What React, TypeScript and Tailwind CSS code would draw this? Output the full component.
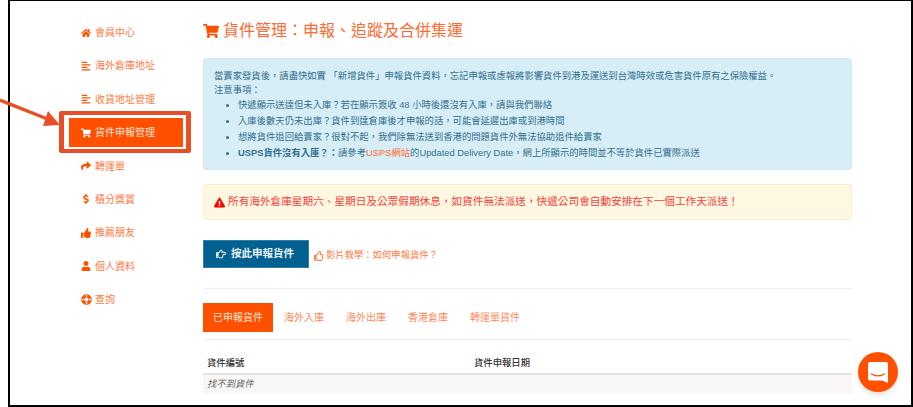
import React from 'react';
import {
  FaHome,
  FaAlignLeft,
  FaShoppingCart,
  FaShare,
  FaDollarSign,
  FaThumbsUp,
  FaUser,
  FaLifeRing,
  FaExclamationTriangle,
  FaRegHandPointRight,
  FaRegThumbsUp,
} from 'react-icons/fa';

const navItems = [
  { label: '會員中心', icon: FaHome },
  { label: '海外倉庫地址', icon: FaAlignLeft },
  { label: '收貨地址管理', icon: FaAlignLeft },
  { label: '貨件申報管理', icon: FaShoppingCart, active: true },
  { label: '轉運單', icon: FaShare },
  { label: '積分獎賞', icon: FaDollarSign },
  { label: '推薦朋友', icon: FaThumbsUp },
  { label: '個人資料', icon: FaUser },
  { label: '查詢', icon: FaLifeRing, rotated: true },
];

const tabs = ['海外入庫', '海外出庫', '香港倉庫', '轉運單貨件'];

export default function App() {
  return (
    <div
      lang="zh-Hant"
      className="relative w-[913px] h-[407px] overflow-hidden bg-white font-['Liberation_Sans','Noto_Sans_CJK_TC',sans-serif]"
    >
      {/* Screenshot frame */}
      <div className="flex ml-2 w-[905px] h-[407px] border-t border-r-2 border-b-2 border-l-2 border-black">
        {/* Sidebar */}
        <aside className="w-[193px] shrink-0 pl-[59px] pt-[17px]">
          <nav className="flex flex-col gap-[4.4px] w-[114px]">
            {navItems.map((item) => (
              <a
                key={item.label}
                className={`flex items-center h-[29px] pl-3 gap-1 text-[10px] ${
                  item.active ? 'bg-[#ff5000] text-[#ffe4d6]' : 'text-[#ff7a45]'
                }`}
              >
                <span className={`flex justify-center w-[10px] ${item.active ? 'text-white' : 'text-[#ff5000]'}`}>
                  <item.icon className={item.rotated ? 'w-[11px] h-[11px] shrink-0 rotate-45' : 'w-[10px] h-[10px]'} />
                </span>
                {item.label}
              </a>
            ))}
          </nav>
        </aside>

        {/* Main */}
        <main className="w-[649px] shrink-0 pt-[18px]">
          <h1 className="flex items-center gap-[4px] h-6 text-[16px] font-normal text-[#ff6a30]">
            <FaShoppingCart className="w-4 h-4 text-[#ff5000]" />
            貨件管理：申報、追蹤及合併集運
          </h1>

          <div className="mt-[15px] h-[112px] pt-[11px] pl-[10px] bg-[#d8eef7] border border-[#cfeaf3] rounded-[3px] text-[9.33px] text-[#31708f]">
            <p className="leading-[13.5px]">
              當賣家發貨後，請盡快如實 「新增貨件」申報貨件資料，忘記申報或虛報將影響貨件到港及運送到台灣時效或危害貨件原有之保險權益。
              <br />
              注意事項：
            </p>
            <ul className="list-disc pl-6 leading-4">
              <li>快遞顯示送達但未入庫？若在顯示簽收 48 小時後還沒有入庫，請與我們聯絡</li>
              <li>入庫後數天仍未出庫？貨件到達倉庫後才申報的話，可能會延遲出庫或到港時間</li>
              <li>想將貨件退回給賣家？很對不起，我們除無法送到香港的問題貨件外無法協助退件給賣家</li>
              <li>
                <b className="font-bold">USPS貨件沒有入庫？：</b>請參考
                <a className="text-[#ff6a30]">USPS網站</a>
                的Updated Delivery Date，網上所顯示的時間並不等於貨件已實際派送
              </li>
            </ul>
          </div>

          <div className="flex items-center gap-[3px] mt-[14px] h-9 pl-[10px] bg-[#fef7e1] border border-[#fbeed0] rounded-[3px] text-[10.65px] text-[#f5413c]">
            <FaExclamationTriangle className="w-[11px] h-[11px] text-[#f00]" />
            所有海外倉庫星期六、星期日及公眾假期休息，如貨件無法派送，快遞公司會自動安排在下一個工作天派送！
          </div>

          <div className="flex mt-5 h-7">
            <button className="flex items-center gap-[5px] w-[106px] h-7 pl-[12px] bg-[#00608f] border border-[#2f7ea6] text-[10.5px] font-bold text-[#e8f1f6]">
              <FaRegHandPointRight className="w-[10px] h-[10px] text-white" />
              按此申報貨件
            </button>
            <a className="flex items-center gap-[2px] ml-[5px] mt-1 text-[9.33px] text-[#ff7a45]">
              <FaRegThumbsUp className="w-[10px] h-[10px]" />
              影片教學：如何申報貨件？
            </a>
          </div>

          <hr className="mt-5 border-[#eeeeee]" />

          <div className="flex mt-[14px] pb-[7px] border-b border-[#eeeeee] text-[10px]">
            <span className="flex items-center h-[29px] px-[10px] bg-[#ff5000] text-[#ffe4d6]">已申報貨件</span>
            {tabs.map((tab) => (
              <span key={tab} className="flex items-center h-[29px] px-[11px] text-[#ff8a5c]">
                {tab}
              </span>
            ))}
          </div>

          <table className="w-full mt-4 text-[9.33px] text-[#333333] border-collapse">
            <thead>
              <tr className="border-b-2 border-[#e2e2e2]">
                <th className="w-[268px] pl-1 pt-px pb-1 leading-3 text-left font-medium">貨件編號</th>
                <th className="pl-[3px] pt-px pb-1 leading-3 text-left font-medium">貨件申報日期</th>
              </tr>
            </thead>
            <tbody>
              <tr className="bg-[#f8f7f5]">
                <td colSpan={2} className="h-5 pl-1 italic text-[#666666]">找不到貨件</td>
              </tr>
            </tbody>
          </table>
        </main>
      </div>

      {/* Annotation: red frame and arrow */}
      <div className="absolute left-[59px] top-[111px] w-[132px] h-[42px] border-x-[5px] border-y-4 border-[#ea4e27] rounded-[2px]" />
      <svg className="absolute left-0 top-[95px]" width="62" height="40" viewBox="0 0 62 40">
        <path d="M0 5 L50 25" stroke="#ea4e27" strokeWidth="3.5" fill="none" />
        <path d="M60 30 L48 16 L43 31 Z" fill="#ea4e27" />
      </svg>

      {/* Messenger launcher */}
      <div className="absolute left-[858px] top-[352px] flex items-center justify-center w-10 h-10 rounded-full bg-[#ff5000] shadow-md">
        <svg width="20" height="21" viewBox="0 0 20 21">
          <path d="M2 0 H18 A2 2 0 0 1 20 2 V21 L14 18.5 H2 A2 2 0 0 1 0 16.5 V2 A2 2 0 0 1 2 0 Z" fill="#ffffff" />
          <path d="M3.5 12 C7 14.5 13 14.5 16.5 12" stroke="#ff5000" strokeWidth="1.4" strokeLinecap="round" fill="none" />
        </svg>
      </div>
    </div>
  );
}
